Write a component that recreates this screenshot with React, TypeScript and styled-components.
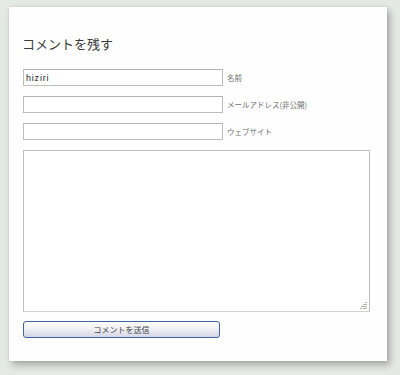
import styled, { createGlobalStyle } from 'styled-components';

const GlobalStyle = createGlobalStyle`
  html, body {
    margin: 0;
    padding: 0;
    background: #e5e9e5;
    height: 375px;
    overflow: hidden;
  }
  body {
    font-family: 'Noto Sans CJK JP', 'Liberation Sans', sans-serif;
  }
`;

const Page = styled.div`
  padding: 7px 0 0 9px;
`;

const Card = styled.form`
  box-sizing: border-box;
  width: 378px;
  height: 354px;
  background: #fdfefd;
  padding: 28px 14px 0 14px;
  box-shadow: 0 0 2px rgba(0, 0, 0, 0.12), 3px 4px 7px rgba(0, 0, 0, 0.28);
  display: flex;
  flex-direction: column;
`;

const Title = styled.h3`
  margin: 0 0 16px -1px;
  font-size: 13px;
  line-height: 18px;
  font-weight: normal;
  color: #3c3c3c;
`;

const Row = styled.div`
  display: flex;
  align-items: center;
  gap: 4px;
  margin-bottom: 10px;
`;

const TextInput = styled.input`
  box-sizing: border-box;
  width: 200px;
  height: 17px;
  margin: 0;
  padding: 0 2px;
  border: 1px solid #bdbdbd;
  border-top-color: #b2b2b2;
  background: #fff;
  font-family: 'Liberation Sans', 'DejaVu Sans', sans-serif;
  font-size: 9px;
  color: #222;
  letter-spacing: 0.8px;
  outline: none;
`;

const Label = styled.label`
  font-size: 7.5px;
  color: #707070;
  white-space: nowrap;
`;

const AreaWrap = styled.div`
  position: relative;
  width: 347px;
  height: 162px;
  margin-bottom: 9px;
`;

const TextArea = styled.textarea`
  box-sizing: border-box;
  display: block;
  width: 100%;
  height: 100%;
  margin: 0;
  border: 1px solid #bdbdbd;
  border-bottom-color: #d2d2d2;
  background: #fff;
  resize: none;
  outline: none;
`;

const Grip = styled.svg`
  position: absolute;
  right: 3px;
  bottom: 3px;
`;

const Submit = styled.button`
  box-sizing: border-box;
  width: 197px;
  height: 17px;
  padding: 0;
  border: 1px solid #3f64a0;
  border-radius: 3px;
  background: linear-gradient(#ffffff 0%, #f0f0f7 45%, #d6d6e6 100%);
  font-family: 'Noto Sans CJK JP', sans-serif;
  font-size: 8px;
  line-height: 15px;
  color: #454545;
  cursor: pointer;
`;

const fields = [
  { label: '名前', value: 'hiziri' },
  { label: 'メールアドレス(非公開)', value: '' },
  { label: 'ウェブサイト', value: '' },
];

export default function App() {
  return (
    <>
      <GlobalStyle />
      <Page>
        <Card onSubmit={(e) => e.preventDefault()}>
          <Title>コメントを残す</Title>
          {fields.map((f) => (
            <Row key={f.label}>
              <TextInput defaultValue={f.value} />
              <Label>{f.label}</Label>
            </Row>
          ))}
          <AreaWrap>
            <TextArea />
            <Grip width="7" height="7" viewBox="0 0 7 7">
              <g fill="#b8b2a8">
                <rect x="5" y="0" width="2" height="1" />
                <rect x="3" y="2" width="2" height="1" />
                <rect x="5" y="2" width="2" height="1" />
                <rect x="1" y="4" width="2" height="1" />
                <rect x="3" y="4" width="2" height="1" />
                <rect x="5" y="4" width="2" height="1" />
                <rect x="0" y="6" width="2" height="1" />
                <rect x="3" y="6" width="2" height="1" />
                <rect x="5" y="6" width="2" height="1" />
              </g>
            </Grip>
          </AreaWrap>
          <Submit type="submit">コメントを送信</Submit>
        </Card>
      </Page>
    </>
  );
}
